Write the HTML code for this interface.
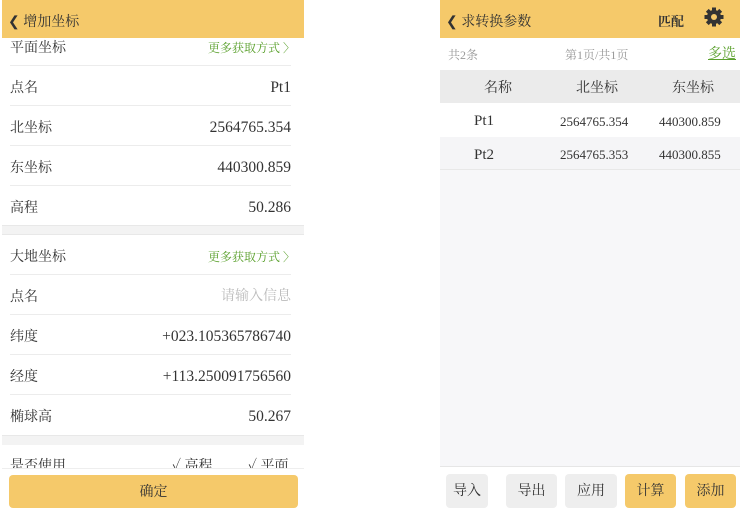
<!DOCTYPE html>
<html><head><meta charset="utf-8"><style>
*{margin:0;padding:0;box-sizing:border-box}
body{width:746px;height:516px;background:#fff;position:relative;overflow:hidden;font-family:"Liberation Serif","Noto Serif CJK SC",serif;color:#333}
.a{position:absolute}
.hdr{background:#f5c96a;height:38px}
.row{position:absolute;left:10px;width:281px;height:40px;border-bottom:1px solid #ececec;font-size:14px;line-height:40px}
.row span.l{position:absolute;left:0;top:3px}
.row .r{position:absolute;right:0;top:2px;font-size:15.5px}
.g{color:#5aa02c;font-size:12px!important;right:-4px!important}
.btn{position:absolute;top:474px;height:34px;border-radius:4px;background:#eeeeee;font-size:14px;text-align:center;line-height:36px}
.y{background:#f5c96a}
</style></head><body>
<!-- left -->
<div class="a hdr" style="left:2px;top:0;width:302px"></div>
<div class="a" style="left:8px;top:11px;font-size:14px">❮ 增加坐标</div>
<div class="a" style="left:2px;top:38px;width:302px;height:430px;background:#fff"></div>
<div class="row" style="top:26px"><span class="l">平面坐标</span><span class="r g">更多获取方式 〉</span></div>
<div class="row" style="top:66px"><span class="l">点名</span><span class="r">Pt1</span></div>
<div class="row" style="top:106px"><span class="l">北坐标</span><span class="r">2564765.354</span></div>
<div class="row" style="top:146px"><span class="l">东坐标</span><span class="r">440300.859</span></div>
<div class="row" style="top:186px;border-bottom:none"><span class="l">高程</span><span class="r">50.286</span></div>
<div class="a" style="left:2px;top:225px;width:302px;height:10px;background:#f3f3f3;border-top:1px solid #e8e8e8;border-bottom:1px solid #e8e8e8"></div>
<div class="row" style="top:235px"><span class="l">大地坐标</span><span class="r g">更多获取方式 〉</span></div>
<div class="row" style="top:275px"><span class="l">点名</span><span class="r" style="color:#bbb;font-size:14px">请输入信息</span></div>
<div class="row" style="top:315px"><span class="l">纬度</span><span class="r">+023.105365786740</span></div>
<div class="row" style="top:355px"><span class="l">经度</span><span class="r">+113.250091756560</span></div>
<div class="row" style="top:395px;border-bottom:none"><span class="l">椭球高</span><span class="r">50.267</span></div>
<div class="a" style="left:2px;top:435px;width:302px;height:10px;background:#f3f3f3;border-top:1px solid #e8e8e8"></div>
<div class="a" style="left:10px;top:454px;font-size:14px;height:14px;overflow:hidden;line-height:26px;width:290px">是否使用<span style="position:absolute;left:162px">✓ 高程</span><span style="position:absolute;left:238px">✓ 平面</span></div>
<div class="a" style="left:2px;top:468px;width:302px;height:48px;background:#fff;border-top:1px solid #eee"></div>
<div class="a y" style="left:9px;top:475px;width:289px;height:33px;border-radius:4px;text-align:center;line-height:35px;font-size:14px">确定</div>
<!-- right -->
<div class="a hdr" style="left:440px;top:0;width:300px"></div>
<div class="a" style="left:446px;top:11px;font-size:14px">❮ 求转换参数</div>
<div class="a" style="left:658px;top:11px;font-size:13px;font-weight:bold">匹配</div>
<svg class="a" style="left:704px;top:7px" width="20" height="20" viewBox="0 0 20 20"><g fill="#333"><circle cx="10" cy="10" r="7"/><rect x="8" y="0.5" width="4" height="19"/><rect x="0.5" y="8" width="19" height="4"/><rect x="8" y="0.5" width="4" height="19" transform="rotate(45 10 10)"/><rect x="8" y="0.5" width="4" height="19" transform="rotate(-45 10 10)"/></g><circle cx="10" cy="10" r="3" fill="#f5c96a"/></svg>
<div class="a" style="left:440px;top:38px;width:300px;height:32px;background:#fff;font-size:12px;line-height:34px;color:#999">
<span class="a" style="left:8px">共2条</span><span class="a" style="left:125px">第1页/共1页</span><span class="a" style="left:268px;color:#5aa02c;text-decoration:underline;font-size:14px">多选</span></div>
<div class="a" style="left:440px;top:70px;width:300px;height:33px;background:#ebebeb;font-size:14px;line-height:37px">
<span class="a" style="left:44px">名称</span><span class="a" style="left:136px">北坐标</span><span class="a" style="left:232px">东坐标</span></div>
<div class="a" style="left:440px;top:103px;width:300px;height:34px;background:#fff;line-height:37px;font-size:13px">
<span class="a" style="left:34px;font-size:15px">Pt1</span><span class="a" style="left:120px">2564765.354</span><span class="a" style="left:219px">440300.859</span></div>
<div class="a" style="left:440px;top:137px;width:300px;height:33px;background:#f5f5f7;line-height:36px;font-size:13px;border-bottom:1px solid #e8e8e8">
<span class="a" style="left:34px;font-size:15px">Pt2</span><span class="a" style="left:120px">2564765.353</span><span class="a" style="left:219px">440300.855</span></div>
<div class="a" style="left:440px;top:170px;width:300px;height:297px;background:#f7f7f9;border-bottom:1px solid #e6e6e6"></div>
<div class="btn" style="left:446px;width:42px">导入</div>
<div class="btn" style="left:506px;width:51px">导出</div>
<div class="btn" style="left:565px;width:52px">应用</div>
<div class="btn y" style="left:625px;width:51px">计算</div>
<div class="btn y" style="left:685px;width:51px">添加</div>
</body></html>
